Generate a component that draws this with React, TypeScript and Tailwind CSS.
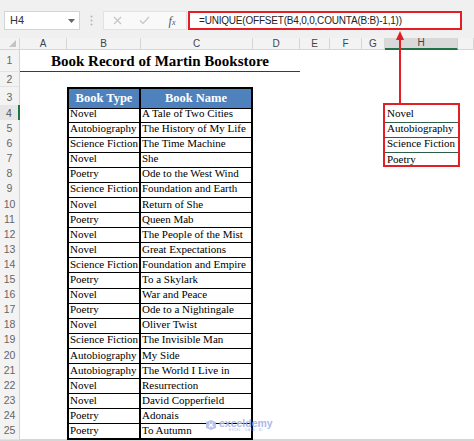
import React from "react";

const GRID = "grid grid-cols-[20px_47px_74px_112px_47px_30px_32px_23px_73px_1fr]";

const rows: [string, string][] = [
  ["Novel", "A Tale of Two Cities"],
  ["Autobiography", "The History of My Life"],
  ["Science Fiction", "The Time Machine"],
  ["Novel", "She"],
  ["Poetry", "Ode to the West Wind"],
  ["Science Fiction", "Foundation and Earth"],
  ["Novel", "Return of She"],
  ["Poetry", "Queen Mab"],
  ["Novel", "The People of the Mist"],
  ["Novel", "Great Expectations"],
  ["Science Fiction", "Foundation and Empire"],
  ["Poetry", "To a Skylark"],
  ["Novel", "War and Peace"],
  ["Poetry", "Ode to a Nightingale"],
  ["Novel", "Oliver Twist"],
  ["Science Fiction", "The Invisible Man"],
  ["Autobiography", "My Side"],
  ["Autobiography", "The World I Live in"],
  ["Novel", "Resurrection"],
  ["Novel", "David Copperfield"],
  ["Poetry", "Adonais"],
  ["Poetry", "To Autumn"],
];

const unique = ["Novel", "Autobiography", "Science Fiction", "Poetry"];

function RowNum({ n, sel }: { n: number; sel?: boolean }) {
  return (
    <div
      className={
        sel
          ? "flex items-center justify-center bg-[#e6e6e6] text-[10.5px] leading-none text-[#555] border-b border-b-[#e2e2e2] border-r-2 border-r-[#217346]"
          : "flex items-center justify-center bg-[#f3f3f3] text-[10.5px] leading-none text-[#666] border-b border-b-[#e2e2e2] border-r border-r-[#d4d4d4]"
      }
    >
      {n}
    </div>
  );
}

function ColHead({ label, sel }: { label: string; sel?: boolean }) {
  return (
    <div
      className={
        sel
          ? "flex items-center justify-center bg-[#d9d9d9] text-[10px] leading-none text-[#444] border-r border-r-[#cfcfcf] border-b-2 border-b-[#217346]"
          : "flex items-center justify-center bg-[#f3f3f3] text-[10px] leading-none text-[#444] border-r border-r-[#d6d6d6] border-b border-b-[#d6d6d6]"
      }
    >
      {label}
    </div>
  );
}

export default function App() {
  return (
    <div className="relative w-[474px] h-[441px] overflow-hidden bg-white font-['Liberation_Sans',sans-serif]">
      {/* Formula bar */}
      <div className="h-[38px] bg-[#f0f0f0] pt-[11px] flex items-start">
        <div className="ml-[4px] w-[76px] h-[19px] bg-white border border-[#d4d4d4] flex items-center justify-between pl-[5px] pr-[4px] text-[11px] text-[#333]">
          <span>H4</span>
          <svg width="7" height="4" viewBox="0 0 7 4">
            <polygon points="0,0 7,0 3.5,4" fill="#666" />
          </svg>
        </div>
        <div className="w-[23px] h-[19px] flex items-center justify-center">
          <svg width="3" height="11" viewBox="0 0 3 11">
            <circle cx="1.5" cy="1.5" r="1" fill="#b5b5b5" />
            <circle cx="1.5" cy="5.5" r="1" fill="#b5b5b5" />
            <circle cx="1.5" cy="9.5" r="1" fill="#b5b5b5" />
          </svg>
        </div>
        <div className="w-[84px] h-[19px] bg-[#f9f9f9] border border-[#e2e2e2] flex items-center">
          <div className="w-[27px] flex justify-center">
            <svg width="9" height="9" viewBox="0 0 9 9">
              <path d="M1 1 L8 8 M8 1 L1 8" stroke="#c4c4c4" strokeWidth="1.2" />
            </svg>
          </div>
          <div className="w-[27px] flex justify-center">
            <svg width="11" height="9" viewBox="0 0 11 9">
              <path d="M1 4.5 L4 7.5 L10 1" stroke="#c4c4c4" strokeWidth="1.2" fill="none" />
            </svg>
          </div>
          <div className="w-[28px] flex justify-center items-end font-['Liberation_Serif',serif] italic text-[#555]">
            <span className="text-[12px] leading-none">f</span>
            <span className="text-[8px] leading-none">x</span>
          </div>
        </div>
        <div className="ml-[1px] w-[274px] h-[19px] border-2 border-[#e31e24] bg-white pl-[9px] flex items-center text-[10px] tracking-[-0.2px] text-[#222]">
          =UNIQUE(OFFSET(B4,0,0,COUNTA(B:B)-1,1))
        </div>
      </div>

      {/* Column headers */}
      <div className={`${GRID} h-[12px]`}>
        <div className="relative bg-[#f3f3f3] border-r border-r-[#d6d6d6] border-b border-b-[#d6d6d6] flex items-end justify-end pr-[3px] pb-[2px]">
          <svg width="7" height="7" viewBox="0 0 7 7">
            <polygon points="7,0 7,7 0,7" fill="#c4c4c4" />
          </svg>
        </div>
        {["A", "B", "C", "D", "E", "F", "G"].map((c) => (
          <ColHead key={c} label={c} />
        ))}
        <ColHead label="H" sel />
        <ColHead label="" />
      </div>

      {/* Row 1 - title */}
      <div className={`${GRID} h-[22px]`}>
        <RowNum n={1} />
        <div className="col-span-4 border-b-[1.5px] border-b-[#3a3a3a] flex items-end justify-center pb-[1px] font-['Liberation_Serif',serif] font-bold text-[15px] leading-[17px] text-black">
          Book Record of Martin Bookstore
        </div>
      </div>

      {/* Row 2 */}
      <div className={`${GRID} h-[15px]`}>
        <RowNum n={2} />
      </div>

      {/* Row 3 - table header */}
      <div className={`${GRID} h-[18px]`}>
        <RowNum n={3} />
        <div />
        <div className="bg-[#4f81bd] border-t-2 border-l-2 border-r-2 border-b border-black flex items-center justify-center font-['Liberation_Serif',serif] font-bold text-[12.5px] text-white">
          Book Type
        </div>
        <div className="bg-[#4f81bd] border-t-2 border-r-2 border-b border-black flex items-center justify-center font-['Liberation_Serif',serif] font-bold text-[12.5px] text-white">
          Book Name
        </div>
      </div>

      {/* Body rows */}
      {rows.map(([t, n], i) => {
        const r = i + 4;
        const last = i === rows.length - 1;
        const u = r >= 4 && r <= 7 ? unique[r - 4] : null;
        return (
          <div key={r} className={`${GRID} h-[15.1px]`}>
            <RowNum n={r} sel={r === 4} />
            <div />
            <div
              className={
                last
                  ? "border-l-2 border-r-2 border-b-2 border-black pl-[1px] flex items-center whitespace-nowrap font-['Liberation_Serif',serif] text-[11px] text-black"
                  : "border-l-2 border-r-2 border-b border-black pl-[1px] flex items-center whitespace-nowrap font-['Liberation_Serif',serif] text-[11px] text-black"
              }
            >
              {t}
            </div>
            <div
              className={
                last
                  ? "border-r-2 border-b-2 border-black pl-[1px] flex items-center whitespace-nowrap font-['Liberation_Serif',serif] text-[11px] text-black"
                  : "border-r-2 border-b border-black pl-[1px] flex items-center whitespace-nowrap font-['Liberation_Serif',serif] text-[11px] text-black"
              }
            >
              {n}
            </div>
            <div />
            <div />
            <div />
            <div />
            {u ? (
              <div
                className={
                  r < 7
                    ? "border-b border-b-[#2d5e48] pl-[2px] flex items-center whitespace-nowrap font-['Liberation_Serif',serif] text-[11px] text-black"
                    : "pl-[2px] flex items-center whitespace-nowrap font-['Liberation_Serif',serif] text-[11px] text-black"
                }
              >
                {u}
              </div>
            ) : (
              <div />
            )}
          </div>
        );
      })}

      {/* bottom scrollbar strip */}
      <div className="h-[2px]" />
      <div className="h-[4px] bg-[#d6d6d6]" />

      {/* Annotation: red box around result */}
      <div className="absolute left-[383px] top-[103px] w-[77px] h-[64px] border-2 border-[#e31e24]" />

      {/* Annotation: arrow */}
      <svg className="absolute left-[396px] top-[30px]" width="8" height="74" viewBox="0 0 8 74">
        <line x1="4" y1="74" x2="4" y2="6" stroke="#e31e24" strokeWidth="2" />
        <polygon points="4,1 8,10 0,10" fill="#e31e24" />
      </svg>

      {/* Watermark */}
      <div className="absolute left-[205px] top-[418px] flex items-center gap-[2px] opacity-90">
        <svg width="12" height="12" viewBox="0 0 12 12">
          <path d="M1 3 L6 1 L11 3 L11 9 L6 11 L1 9 Z" fill="#b3c0ea" />
          <path d="M4 4 L8 8 M8 4 L4 8" stroke="#ffffff" strokeWidth="1.2" />
        </svg>
        <div className="flex flex-col items-center leading-none">
          <span className="text-[10.5px] font-bold text-[#a3b2e6] leading-[10px]">exceldemy</span>
          <span className="text-[3px] text-[#a3b2e6] tracking-[0.5px] leading-[4px]">EXCEL · DATA · BI</span>
        </div>
      </div>
    </div>
  );
}
